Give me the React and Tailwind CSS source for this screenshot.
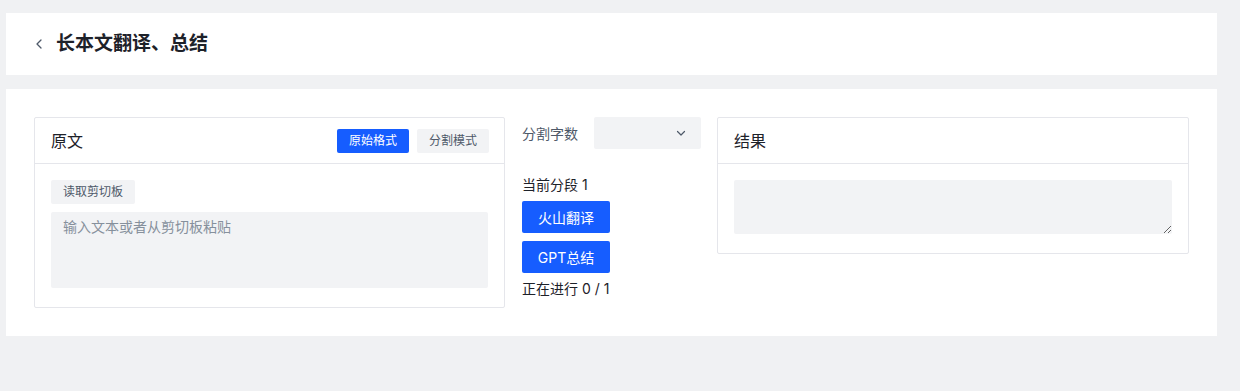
import React from "react";

const font = { fontFamily: 'Inter, "Noto Sans CJK SC", sans-serif' };

const Chevron = ({ className }) => (
  <svg className={className} viewBox="0 0 12 12" fill="none" stroke="currentColor" strokeWidth="1.3" strokeLinecap="round" strokeLinejoin="round">
    <path d="M8 2 4 6l4 4" />
  </svg>
);

const Card = ({ title, actions, children, className }) => (
  <div className={`border border-[#e5e6eb] rounded-[2px] bg-white ${className}`}>
    <div className="h-[46px] flex items-center justify-between pl-[16px] pr-[15px] border-b border-[#e5e6eb]">
      <span className="text-[16px] text-[#1d2129]">{title}</span>
      <div className="flex gap-2">{actions}</div>
    </div>
    <div className="px-[16px] pt-[16px] pb-[19px]">{children}</div>
  </div>
);

export default function App() {
  return (
    <div className="min-h-[391px] bg-[#f0f1f3] pt-[13px] pl-[6px]" style={font}>
      <div className="w-[1211px] h-[62px] bg-white flex items-center pl-[27px]">
        <Chevron className="w-[12px] h-[12px] text-[#4e5969]" />
        <h1 className="ml-[11px] text-[19px] font-semibold text-[#1d2129]">长本文翻译、总结</h1>
      </div>

      <div className="w-[1211px] mt-[14px] bg-white p-[28px] flex items-start">
        <Card
          title="原文"
          className="w-[471px]"
          actions={
            <>
              <button className="h-[24px] w-[72px] rounded-[2px] bg-[#165dff] text-white text-[12px]">原始格式</button>
              <button className="h-[24px] w-[72px] rounded-[2px] bg-[#f2f3f5] text-[#4e5969] text-[12px]">分割模式</button>
            </>
          }
        >
          <button className="block h-[24px] px-[12px] rounded-[2px] bg-[#f2f3f5] text-[#4e5969] text-[12px]">读取剪切板</button>
          <textarea
            className="block mt-[8px] w-full h-[76px] resize-none rounded-[2px] bg-[#f2f3f5] px-[12px] py-[4px] text-[14px] leading-[22px] placeholder:text-[#86909c] outline-none"
            placeholder="输入文本或者从剪切板粘贴"
          />
        </Card>

        <div className="w-[179px] ml-[17px] text-[14px] text-[#1d2129]">
          <div className="flex items-center">
            <span className="w-[72px] text-[#4e5969]">分割字数</span>
            <div className="w-[107px] h-[32px] rounded-[2px] bg-[#f2f3f5] flex items-center justify-end pr-[14px]">
              <svg className="w-[12px] h-[12px] text-[#4e5969]" viewBox="0 0 12 12" fill="none" stroke="currentColor" strokeWidth="1.2" strokeLinecap="round" strokeLinejoin="round">
                <path d="M2.5 4.5 6 8l3.5-3.5" />
              </svg>
            </div>
          </div>
          <div className="mt-[25px] leading-[22px]">当前分段 1</div>
          <button className="mt-[5px] block w-[88px] h-[32px] rounded-[2px] bg-[#165dff] text-white text-[14px]">火山翻译</button>
          <button className="mt-[8px] block w-[88px] h-[32px] rounded-[2px] bg-[#165dff] text-white text-[14px]">GPT总结</button>
          <div className="mt-[5px] leading-[22px]">正在进行 0 / 1</div>
        </div>

        <Card title="结果" className="w-[472px] ml-[16px]">
          <textarea className="block w-full h-[54px] rounded-[2px] bg-[#f2f3f5] px-[12px] py-[4px] text-[14px] outline-none" />
        </Card>
      </div>
    </div>
  );
}
